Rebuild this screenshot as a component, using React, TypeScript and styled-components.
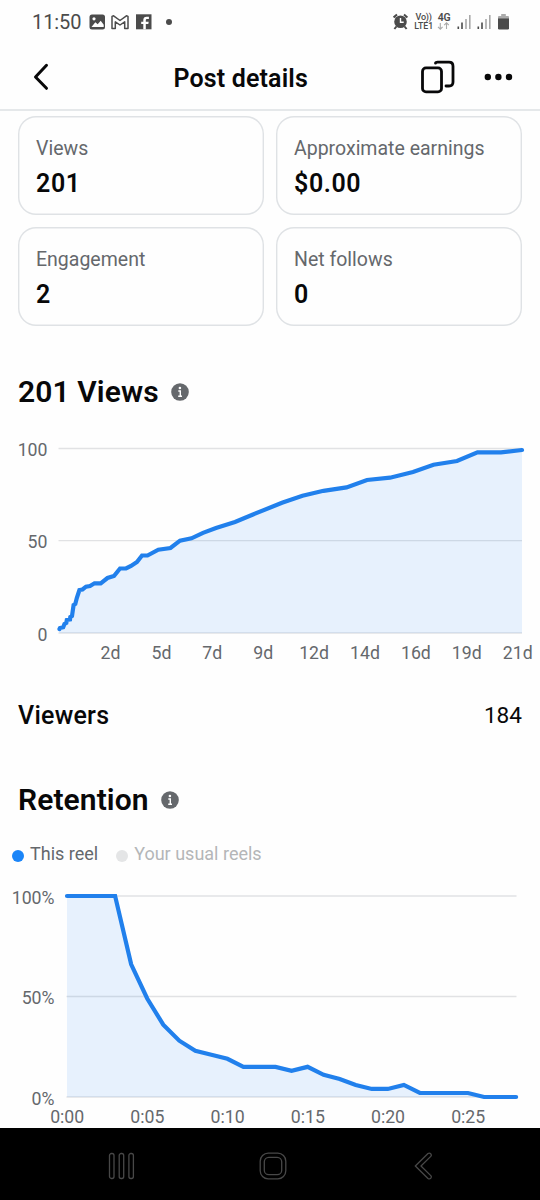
import React from 'react';
import styled, { createGlobalStyle } from 'styled-components';

const Global = createGlobalStyle`
  * { box-sizing: border-box; }
  body { margin: 0; background: #fefefe; font-family: Roboto, sans-serif; color: #080809; }
`;

const Screen = styled.div`
  display: flex;
  flex-direction: column;
  width: 540px;
  height: 1200px;
  overflow: hidden;
  background: #fefefe;
`;

const StatusBar = styled.div`
  display: flex;
  align-items: center;
  justify-content: space-between;
  height: 44px;
  padding: 0 31px 0 32px;
  color: #4b4b4b;
  flex-shrink: 0;
`;

const StatusGroup = styled.div`
  display: flex;
  align-items: center;
`;

const Clock = styled.span`
  font-size: 20px;
  font-weight: 380;
  line-height: 24px;
  letter-spacing: -0.1px;
  width: 56.5px;
  white-space: nowrap;
`;

const Header = styled.header`
  display: grid;
  grid-template-columns: 134px 1fr 132px;
  align-items: center;
  height: 67px;
  padding-top: 1px;
  border-bottom: 2px solid #e5e8ea;
  flex-shrink: 0;
`;

const HeaderTitle = styled.h1`
  margin: 4px 0 0 39.5px;
  font-size: 25px;
  line-height: 30px;
  font-weight: 600;
  letter-spacing: 0.15px;
  white-space: nowrap;
`;

const HeaderSide = styled.div<{ $end?: boolean }>`
  display: flex;
  align-items: center;
  justify-content: ${p => (p.$end ? 'flex-end' : 'flex-start')};
  gap: 29px;
  padding: ${p => (p.$end ? '0 27.5px 0 0' : '0 0 0 32px')};
`;

const Content = styled.main`
  flex: 1;
  min-height: 0;
  overflow: hidden;
`;

const StatGrid = styled.div`
  display: grid;
  grid-template-columns: 246px 246px;
  gap: 12px;
  padding: 5px 18px 0;
`;

const StatCard = styled.div`
  height: 99px;
  border-radius: 18px;
  box-shadow: inset 0 0 0 1.4px #dfe2e5;
  padding: 20px 18px;
`;

const StatLabel = styled.div`
  font-size: 19.5px;
  line-height: 25px;
  color: #65686c;
  white-space: nowrap;
`;

const StatValue = styled.div`
  margin-top: 8px;
  font-size: 25px;
  line-height: 30px;
  font-weight: 600;
  letter-spacing: 0.6px;
`;

const SectionHeading = styled.div<{ $top: number }>`
  display: flex;
  align-items: center;
  gap: 12px;
  height: 36px;
  margin-top: ${p => p.$top}px;
  padding-left: 18px;
`;

const SectionTitle = styled.h2`
  margin: 0;
  font-size: 30px;
  line-height: 36px;
  font-weight: 600;
  letter-spacing: 0.1px;
  white-space: nowrap;
`;

const Chart = styled.svg`
  display: block;
  width: 540px;
`;

const AxisText = styled.text`
  font-family: Roboto, sans-serif;
  font-size: 17.7px;
  fill: #65686c;
`;

const MetricRow = styled.div`
  display: flex;
  align-items: center;
  justify-content: space-between;
  height: 36px;
  margin-top: 27px;
  padding: 0 18px;
  font-size: 22.6px;
`;

const MetricName = styled.span`
  font-size: 25px;
  font-weight: 480;
  letter-spacing: 0.25px;
`;

const Legend = styled.div`
  display: flex;
  align-items: center;
  height: 24px;
  margin-top: 24px;
  margin-bottom: -1px;
  padding-left: 12px;
  gap: 18px;
`;

const LegendItem = styled.div<{ $muted?: boolean }>`
  display: flex;
  align-items: center;
  gap: 6px;
  font-size: 18px;
  line-height: 24px;
  white-space: nowrap;
  color: ${p => (p.$muted ? '#b4b6b8' : '#65686c')};
`;

const LegendDot = styled.i<{ $color: string }>`
  width: 12px;
  height: 12px;
  margin-top: 3px;
  border-radius: 50%;
  background: ${p => p.$color};
`;

const NavBar = styled.nav`
  display: flex;
  align-items: center;
  justify-content: space-between;
  height: 72px;
  padding: 4px 106px 0 108px;
  background: #000;
  flex-shrink: 0;
`;

const InfoIcon = () => (
  <svg width="18" height="18" viewBox="0 0 18 18">
    <circle cx="9" cy="9" r="8.8" fill="#65686c" />
    <circle cx="8.9" cy="5" r="1.3" fill="#fff" />
    <path d="M7.3 8h2v5M7.2 13.2h3.8" fill="none" stroke="#fff" strokeWidth="1.4" />
  </svg>
);

const SignalIcon = styled.svg`
  margin-left: 6px;
`;

const Signal = () => (
  <SignalIcon width="14" height="16" viewBox="0 0 14 16">
    <path d="M1.3 12.5V15M5 8.5V15" stroke="#4b4b4b" strokeWidth="1.6" />
    <path d="M9 5V15M12.8 1V15" stroke="#a9a9a9" strokeWidth="1.6" />
  </SignalIcon>
);

const StatusIcons = () => (
  <svg width="85" height="18" viewBox="0 0 85 18">
    <rect x="0.5" y="1.5" width="15.5" height="15" rx="2.5" fill="#4b4b4b" />
    <circle cx="5" cy="5.8" r="1.6" fill="#fefefe" />
    <path d="M2.5 14 6.3 9.2l2.4 2 3-3.4 3 4V14z" fill="#fefefe" />
    <path d="M23 15.5V3.4l1.6-.6 6.4 4.7 6.4-4.7 1.6.6v12.1h-3.3V8.8L31 12l-4.7-3.2v6.7z" fill="none" stroke="#4b4b4b" strokeWidth="1.5" strokeLinejoin="round" />
    <rect x="47" y="1.3" width="15.5" height="15" fill="#4b4b4b" />
    <path d="M56.8 16.3V11h2.5l.4-2.3h-2.9V7.3c0-1 .5-1.4 1.5-1.4h1.6V3.7h-2.3c-2.1 0-3.3 1.2-3.3 3.3v1.7h-2.1V11h2.1v5.3z" fill="#fefefe" />
    <circle cx="80" cy="9" r="3" fill="#4b4b4b" />
  </svg>
);

const SystemIcons = () => (
  <svg width="58" height="20" viewBox="0 0 58 20">
    <circle cx="7.5" cy="9.8" r="6.3" fill="#4b4b4b" />
    <path d="M.6 5.4 4 2.4M11 2.4l3.4 3M3.4 14.5 1.4 17M11.6 14.5l2 2.5" stroke="#4b4b4b" strokeWidth="2" />
    <path d="M7.5 6v4.2h3.2" fill="none" stroke="#fefefe" strokeWidth="1.4" />
    <g fontFamily="Roboto, sans-serif" fontWeight="500" fill="#4b4b4b">
      <text x="22.5" y="8.2" fontSize="9" textLength="16.5">Vo))</text>
      <text x="21.3" y="17" fontSize="9.2" textLength="19" lengthAdjust="spacingAndGlyphs">LTE1</text>
      <text x="44.7" y="9" fontSize="10.5" textLength="13" fontWeight="600">4G</text>
    </g>
    <path d="M47.3 11v6M45 14.8l2.3 2.3 2.3-2.3M53.5 17v-6M51.2 13.2l2.3-2.3 2.3 2.3" fill="none" stroke="#a9a9a9" strokeWidth="1.1" />
  </svg>
);

const BatteryIcon = styled.svg`
  margin-left: 7px;
`;

const Battery = () => (
  <BatteryIcon width="11" height="16" viewBox="0 0 11 16">
    <path d="M3.2 0h4.600v2H10a1 1 0 0 1 1 1v2H0V3a1 1 0 0 1 1-1h2.200z" fill="#ababab" />
    <path d="M0 4.500h11v9.800a1.300 1.300 0 0 1-1.300 1.300H1.300A1.300 1.300 0 0 1 0 14.300z" fill="#4b4b4b" />
  </BatteryIcon>
);

const stats = [
  { label: 'Views', value: '201' },
  { label: 'Approximate earnings', value: '$0.00' },
  { label: 'Engagement', value: '2' },
  { label: 'Net follows', value: '0' },
];

const viewPoints: [number, number][] = [
  [59.5, 629], [60, 628], [63.2, 627.3], [64.5, 624], [66.3, 623], [66.8, 620], [70, 619.5],
  [70.3, 617], [72, 616], [73.6, 605], [75.3, 604], [76.8, 598], [79.4, 590], [82.5, 589.5],
  [86, 586.7], [90, 586], [94.5, 583.3], [100.7, 583.3], [107.5, 578], [114, 576], [120, 568.5],
  [126, 568.5], [131, 566], [137, 562], [142, 555.5], [147.5, 555.5], [158.3, 549.7], [170.5, 548],
  [180, 540.7], [191.5, 538.3], [203, 532.9], [216, 528], [235, 522], [253, 514.5], [282, 502.8],
  [302.5, 495.8], [323.5, 490.8], [346.5, 487.4], [367, 480], [390, 477.7], [413, 472],
  [433.5, 464.7], [457, 461], [477.5, 452.3], [501, 452.3], [522, 450],
];

const retention = [
  100, 100, 100, 100, 66, 49, 36, 28, 23, 21, 19, 15, 15, 15, 13, 15, 11, 9, 6, 4, 4, 6, 2, 2, 2, 2, 0, 0, 0,
];

const retentionPoints = retention.map((v, i): [number, number] => [67 + i * 16.04, 1097 - v * 2.01]);

const dayTicks = ['2d', '5d', '7d', '9d', '12d', '14d', '16d', '19d', '21d'];
const timeTicks = ['0:00', '0:05', '0:10', '0:15', '0:20', '0:25'];

interface AreaChartProps {
  top: number;
  height: number;
  left: number;
  right: number;
  labelRight: number;
  rows: { y: number; label: string }[];
  ticks: { x: number; label: string }[];
  tickY: number;
  points: [number, number][];
}

const AreaChart = ({ top, height, left, right, labelRight, rows, ticks, tickY, points }: AreaChartProps) => {
  const base = rows[rows.length - 1].y;
  const line = points.map(p => p.join(',')).join(' ');
  return (
    <Chart height={height} viewBox={`0 ${top} 540 ${height}`}>
      {rows.map(r => (
        <React.Fragment key={r.label}>
          <path d={`M${left} ${r.y}H${right}`} stroke="#e1e2e4" strokeWidth="1.3" />
          <AxisText x={labelRight} y={r.y + 7.5} textAnchor="end">{r.label}</AxisText>
        </React.Fragment>
      ))}
      <polygon points={`${points[0][0]},${base} ${line} ${right},${base}`} fill="#1b7ff8" fillOpacity="0.1" />
      <polyline points={line} fill="none" stroke="#2180ec" strokeWidth="4.2" strokeLinecap="round" strokeLinejoin="miter" />
      {ticks.map(t => (
        <AxisText key={t.label} x={t.x} y={tickY} textAnchor="middle">{t.label}</AxisText>
      ))}
    </Chart>
  );
};

export default function App() {
  return (
    <Screen>
      <Global />
      <StatusBar>
        <StatusGroup>
          <Clock>11:50</Clock>
          <StatusIcons />
        </StatusGroup>
        <StatusGroup>
          <SystemIcons />
          <Signal />
          <Signal />
          <Battery />
        </StatusGroup>
      </StatusBar>
      <Header>
        <HeaderSide>
          <svg width="18" height="28" viewBox="0 0 18 28">
            <path d="M14.5 2.3 3.5 14l11 11.3" fill="none" stroke="#080809" strokeWidth="3" strokeLinecap="round" strokeLinejoin="round" />
          </svg>
        </HeaderSide>
        <HeaderTitle>Post details</HeaderTitle>
        <HeaderSide $end>
          <svg width="35" height="34" viewBox="0 0 35 34">
            <rect x="2.5" y="7.9" width="19" height="24" rx="3.5" fill="none" stroke="#080809" strokeWidth="2.8" />
            <path d="M15.5 3.200V3.200Q15.500 2.200 17.500 2.200H29Q33 2.200 33 6.200V22Q33 26 29 26H26" fill="none" stroke="#080809" strokeWidth="2.8" strokeLinecap="round" />
          </svg>
          <svg width="29" height="8" viewBox="0 0 29 8">
            <circle cx="3.8" cy="4" r="3.2" fill="#080809" />
            <circle cx="14.4" cy="4" r="3.2" fill="#080809" />
            <circle cx="25" cy="4" r="3.2" fill="#080809" />
          </svg>
        </HeaderSide>
      </Header>
      <Content>
        <StatGrid>
          {stats.map(s => (
            <StatCard key={s.label}>
              <StatLabel>{s.label}</StatLabel>
              <StatValue>{s.value}</StatValue>
            </StatCard>
          ))}
        </StatGrid>
        <SectionHeading $top={48}>
          <SectionTitle>201 Views</SectionTitle>
          <InfoIcon />
        </SectionHeading>
        <AreaChart
          top={410}
          height={260}
          left={58.5}
          right={522}
          labelRight={47.5}
          rows={[{ y: 448.5, label: '100' }, { y: 540.7, label: '50' }, { y: 633, label: '0' }]}
          ticks={dayTicks.map((label, i) => ({ x: 110.5 + i * 50.9, label }))}
          tickY={658.5}
          points={viewPoints}
        />
        <MetricRow>
          <MetricName>Viewers</MetricName>
          <span>184</span>
        </MetricRow>
        <SectionHeading $top={49}>
          <SectionTitle>Retention</SectionTitle>
          <InfoIcon />
        </SectionHeading>
        <Legend>
          <LegendItem><LegendDot $color="#1b85f8" />This reel</LegendItem>
          <LegendItem $muted><LegendDot $color="#e4e5e6" />Your usual reels</LegendItem>
        </Legend>
        <AreaChart
          top={865}
          height={263}
          left={66.5}
          right={516.5}
          labelRight={54.5}
          rows={[{ y: 896, label: '100%' }, { y: 996.5, label: '50%' }, { y: 1097, label: '0%' }]}
          ticks={timeTicks.map((label, i) => ({ x: 67.2 + i * 80.2, label }))}
          tickY={1123}
          points={retentionPoints}
        />
      </Content>
      <NavBar>
        <svg width="27" height="28" viewBox="0 0 27 28" fill="none" stroke="#484848" strokeWidth="1.3">
          <rect x="1.5" y="1.5" width="4.5" height="25" rx="2" />
          <rect x="11.2" y="1.5" width="4.5" height="25" rx="2" />
          <rect x="20.9" y="1.5" width="4.5" height="25" rx="2" />
        </svg>
        <svg width="28" height="28" viewBox="0 0 28 28" fill="none" stroke="#484848" strokeWidth="1.3">
          <rect x="1.2" y="1.2" width="25.6" height="25.6" rx="8" />
          <rect x="5.3" y="5.3" width="17.4" height="17.4" rx="4.5" />
        </svg>
        <svg width="24" height="28" viewBox="-4 0 24 28" fill="none" stroke="#484848" strokeWidth="1.3" strokeLinejoin="round">
          <path d="M1.3 14 14 1.5q1.6-1 2.8.4 1 1.4 0 2.5L7 14l9.8 9.6q1 1.100 0 2.500-1.200 1.400-2.800.4z" />
        </svg>
      </NavBar>
    </Screen>
  );
}
